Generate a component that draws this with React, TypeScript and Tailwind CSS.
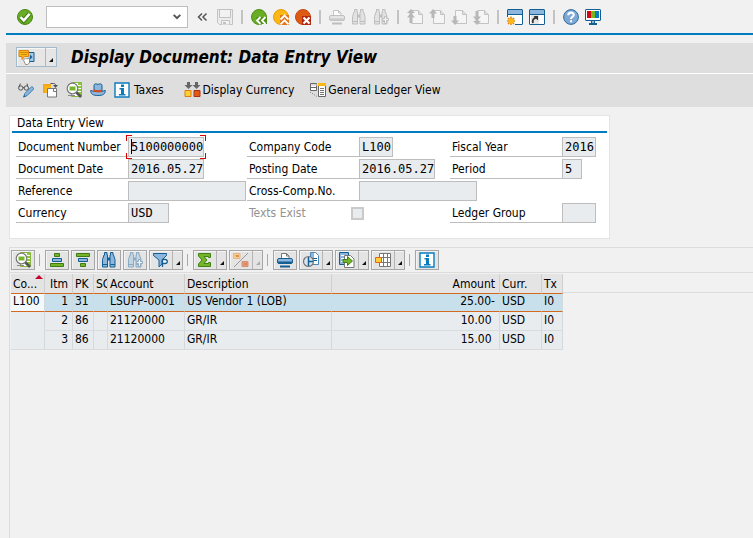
import React, { ReactNode } from "react";

function Icon({ children, label, size = "h-4 w-4" }: { children: ReactNode; label?: string; size?: string }) {
  return (
    <svg viewBox="0 0 16 16" className={`${size} shrink-0`} fill="none" aria-label={label} aria-hidden={label ? undefined : true}>
      {children}
    </svg>
  );
}

/* ---------- system toolbar icons ---------- */

const CheckIcon = () => (
  <Icon>
    <circle cx="8" cy="8" r="7.5" fill="#69ad25" stroke="#4a8712" />
    <path d="M3.5 8.2 6.8 11.6 12.6 4.8" stroke="#3d7710" strokeWidth="4.4" />
    <path d="M3.5 8.2 6.8 11.4 12.6 4.8" stroke="#fff" strokeWidth="2.5" />
  </Icon>
);

const SaveIcon = () => (
  <Icon>
    <path d="M.5.5h15v15h-13l-2-2z" fill="#ececec" stroke="#c2c2c2" />
    <path d="M2.500 1v7.500h11V1" fill="#f2f2f2" stroke="#c2c2c2" />
    <path d="M4.500 15.500v-4h8v4" stroke="#c2c2c2" fill="#f2f2f2" />
    <path d="M6 13h3v2H6z" fill="#c2c2c2" />
  </Icon>
);

const BackIcon = () => (
  <Icon>
    <circle cx="8" cy="8" r="7.5" fill="#69ad25" stroke="#4d8f15" />
    <path d="M5 8h11v7H7z" fill="#4d8f15" />
    <path d="m9.500 8-3.500 3.500 3.500 3.500M14.500 8 11 11.500l3.500 3.500" stroke="#fff" strokeWidth="1.800" />
  </Icon>
);

const ExitIcon = () => (
  <Icon>
    <circle cx="8" cy="8" r="7.5" fill="#fdb913" stroke="#e89a0c" />
    <path d="M7 6h9v10H7z" fill="#e2761b" />
    <path d="m7.500 10.500 4-4 4 4M7.500 15.300l4-4 4 4" stroke="#fff" strokeWidth="1.800" />
  </Icon>
);

const CancelIcon = () => (
  <Icon>
    <circle cx="8" cy="8" r="7.5" fill="#dd5a12" stroke="#c24a10" />
    <path d="M7 7h9v9H7z" fill="#b3260e" />
    <path d="m8.500 8.500 6 6m0-6-6 6" stroke="#fff" strokeWidth="2.200" />
  </Icon>
);

const PrinterIcon = ({ muted = false }: { muted?: boolean }) => {
  const line = muted ? "#bfbfbf" : "#145f92";
  const fill = muted ? "#e4e4e4" : "#8db6de";
  return (
    <Icon>
      <path d="M4.500 7V1.500h5l2.500 2.500v3" fill="#fff" stroke={muted ? "#c4c4c4" : "#777"} />
      <path d="M9.500 1.500V4H12" stroke={muted ? "#c4c4c4" : "#777"} />
      <rect x=".5" y="6.500" width="15" height="5" rx="1.500" fill={fill} stroke={line} />
      <path d="M1 9.500h14v2H1z" fill={muted ? "#c9c9c9" : line} />
      <path d="M3 13.500h10v2H3z" fill={line} />
    </Icon>
  );
};

const BinocularsIcon = ({ tone, plus = false }: { tone: "gray" | "blue" | "pale"; plus?: boolean }) => {
  const line = tone === "gray" ? "#bebebe" : tone === "blue" ? "#145f92" : "#8aaac0";
  const fill = tone === "gray" ? "#e2e2e2" : tone === "blue" ? "#8db6de" : "#c3d4e4";
  return (
    <Icon>
      <path d="M3.500 .5h2.500v2.500h.5v12h-5V7.500l1.500-4.500h.5z" fill={fill} stroke={line} />
      <path d="M9.500 .5h2.500v2.500h.5l1.500 4.500v7.500h-5V3h.5z" fill={fill} stroke={line} />
      <path d="M6.500 5.500h2.500v3H6.500z" fill={line} />
      <path d="M2 12.500h4.500m3 0H14" stroke={line} />
      {plus && <path d="M9.500 9.500h2v-2h2v2h2v2h-2v3h-2v-3h-2z" fill="#f3f3f3" stroke={line} />}
    </Icon>
  );
};

const PageIcon = ({ kind }: { kind: "first" | "prev" | "next" | "last" }) => (
  <Icon>
    <path d="M4.500 1.500h7l4 4v9h-11z" fill="#f5f5f5" stroke="#c3c3c3" />
    <path d="M11.500 1.500v4h4" stroke="#c3c3c3" fill="#ddd" />
    {kind === "first" && <path d="m4 0 4 4H5.500v1.500L8 8.500H5.500V14h-3V8.500H0l2.500-3V4H0z" fill="#b8b8b8" />}
    {kind === "prev" && <path d="m4 0 4 4.500H5.500V9h-3V4.500H0z" fill="#b8b8b8" />}
    {kind === "next" && <path d="m4 16 4-4.500H5.500V7h-3v4.500H0z" fill="#b8b8b8" />}
    {kind === "last" && <path d="m4 16 4-4H5.500v-1.500L8 7.500H5.500V2h-3v5.500H0l2.500 3V12H0z" fill="#b8b8b8" />}
  </Icon>
);

const WindowIcon = ({ kind }: { kind: "new" | "shortcut" }) => (
  <Icon>
    <rect x=".5" y=".5" width="15" height="15" rx=".5" fill="#fff" stroke="#145f92" />
    <path d="M1 1h14v4H1z" fill="#8db6de" />
    <path d="M1 5.500h14" stroke="#145f92" />
    {kind === "new" ? (
      <>
        <path d="M0 8h8v8H0z" fill="#f2f2f2" />
        <path d="M4 7.500v9M0 12h8M1 9l6 6m0-6-6 6" stroke="#e8870c" strokeWidth="1.600" />
        <circle cx="4" cy="12" r="2.600" fill="#fdb913" />
      </>
    ) : (
      <>
        <path d="M2 6h8v9H2z" fill="#e6e6e6" />
        <path d="M4 14c-1-3 .5-5 4-5.500" stroke="#333" strokeWidth="1.800" />
        <path d="M4.500 7H9v4.500z" fill="#333" />
      </>
    )}
  </Icon>
);

const HelpIcon = () => (
  <Icon>
    <circle cx="8" cy="8" r="7.4" fill="#7fa9d4" stroke="#2d6c9f" />
    <path d="M5.300 6.200c0-3.400 5.400-3.300 5.400-.3 0 1.800-2.700 1.900-2.700 4" stroke="#fff" strokeWidth="2.100" />
    <path d="M7 11.300h2v2H7z" fill="#fff" />
  </Icon>
);

const MonitorIcon = () => (
  <Icon>
    <rect x=".5" y=".5" width="15" height="11" rx=".5" fill="#fff" stroke="#145f92" />
    <path d="M2 2h4v7H2z" fill="#cc0c12" />
    <path d="M6 2h4v7H6z" fill="#7ab41d" />
    <path d="M10 2h4v7h-4z" fill="#087cc0" />
    <path d="M6 12h4v2H6zM4 14h8v2H4z" fill="#145f92" />
    <path d="M7 12h2v2H7z" fill="#8db6de" />
  </Icon>
);

/* ---------- application toolbar icons ---------- */

const ServicesIcon = () => (
  <Icon size="h-4 w-[17px]">
    <path d="M10 3.500h5.500v9H9" fill="#a9c8e5" stroke="#145f92" />
    <path d="M11.500 5.500v5l2.500-2.500z" fill="#145f92" />
    <path d="M.5 1.500h9.500v6H6l-2.500 3v-3h-3z" fill="#fdb913" stroke="#dd8212" />
    <path d="M2 3.500h7M3 5.500h6" stroke="#9a5c08" strokeDasharray="1 1" />
    <path d="m5 11 2-2 1 1 3-1v5l-2 1.500H7z" fill="#fff" stroke="#777" strokeWidth=".8" />
  </Icon>
);

const GlassesPenIcon = () => (
  <Icon>
    <circle cx="2.800" cy="6" r="2.200" stroke="#555" />
    <circle cx="8.300" cy="6" r="2.200" stroke="#555" />
    <path d="M.8 5 2.500 1.500M5 5.500h1.200M9.800 4.500 9 1.500" stroke="#555" />
    <path d="m6 14.800.8-3.300 7-7L16 6.700l-7 7z" fill="#8db6de" stroke="#2f75a8" strokeWidth=".9" />
    <path d="m5 15.500 1-2.500 1.500 1.500z" fill="#145f92" />
  </Icon>
);

const OtherDocIcon = () => (
  <Icon>
    <path d="M1 2h8v9H1z" fill="#fdb913" />
    <path d="M1 2h8v2H3v7H1z" fill="#f7a51b" />
    <path d="M5.500 6.500h9v8.500h-9z" fill="#fff" stroke="#777" />
    <path d="M11.500 6.500v3h3" stroke="#777" />
    <path d="M8.500 1.500h3c1.500 0 2 .5 2 2" stroke="#555" />
    <path d="M11 3h5l-2.500 3z" fill="#555" />
  </Icon>
);

const DetailsIcon = () => (
  <Icon>
    <path d="M5.500.5h10v14h-10z" fill="#fff" stroke="#87b83c" />
    <path d="M12 1h3v13h-3z" fill="#8cc63f" />
    <path d="M12 3.500h3M12 6.500h3M12 9.500h3" stroke="#fff" />
    <path d="M2 13.500h7" stroke="#888" />
    <circle cx="6.500" cy="6.500" r="5.300" fill="#fff" stroke="#777" strokeWidth="1.200" />
    <path d="M3.500 4.500h6v4h-6z" fill="#75b52b" />
    <path d="m10.500 10.500 4.500 4.500" stroke="#555" strokeWidth="2.600" />
  </Icon>
);

const HatIcon = () => (
  <Icon>
    <path d="M4 9V3.500C4 1.500 6.500 1.500 8 2.500c1.500-1 4-1 4 1V9z" fill="#8db6de" stroke="#145f92" />
    <path d="M.7 8.500c1 0 2 .5 3.300 1h8c1.300-.5 2.300-1 3.300-1C15.300 12 13 13.500 8 13.500S.7 12 .7 8.500z" fill="#8db6de" stroke="#145f92" />
    <path d="M4 7.500c2 1 6 1 8 0V9.500c-2 1.200-6 1.200-8 0z" fill="#d9471b" />
  </Icon>
);

const InfoIcon = () => (
  <Icon>
    <path d="M1 1h14v14H1z" fill="#fff" stroke="#0a7cbd" strokeWidth="1.400" />
    <path d="M7 2.500h3v2.500H7zM5.500 6H10v6h1.500v1.500H5V12h2V7.500H5.500z" fill="#0a7cbd" />
  </Icon>
);

const CurrencyIcon = () => (
  <Icon size="h-4 w-[17px]">
    <path d="M2.500 0h3v3H8L4 7 0 3h2.500zM10.500 0h3v3H16l-4 4-4-4h2.500z" fill="#666" />
    <path d="M.5 8.500h6v6h-6z" fill="#fdd032" stroke="#dd7d13" />
    <path d="M9.500 8.500h6v6h-6z" fill="#e35a17" stroke="#a93212" />
  </Icon>
);

const LedgerIcon = () => (
  <Icon>
    <path d="M.5 1.500h6v7h-6z" fill="#fff" stroke="#666" />
    <path d="M1 2h5.500v2H1z" fill="#ddd" />
    <path d="M1 5.500h5.500" stroke="#666" />
    <path d="M8.500 1.500h7v13h-7z" fill="#fff" stroke="#666" />
    <path d="M8 1h8v3H8z" fill="#fdb913" />
    <path d="M10 6.500h4M10 8.500h4M10 10.500h4M10 12.500h4" stroke="#777" />
    <path d="m0 10 7 4.500" stroke="#777" strokeDasharray="1 1.500" />
  </Icon>
);

/* ---------- grid toolbar icons ---------- */

const SortIcon = ({ descending = false }: { descending?: boolean }) => (
  <Icon>
    {descending ? (
      <>
        <path d="M1.500 1.500h13v3h-13z" fill="#75b52b" stroke="#3f7d14" />
        <path d="M3.500 6.500h9v3h-9z" fill="#8db6de" stroke="#145f92" />
        <path d="M5.500 11.500h5v3h-5z" fill="#75b52b" stroke="#3f7d14" />
      </>
    ) : (
      <>
        <path d="M5.500 1.500h5v3h-5z" fill="#75b52b" stroke="#3f7d14" />
        <path d="M3.500 6.500h9v3h-9z" fill="#8db6de" stroke="#145f92" />
        <path d="M1.500 11.500h13v3h-13z" fill="#75b52b" stroke="#3f7d14" />
      </>
    )}
  </Icon>
);

const FilterIcon = () => (
  <Icon>
    <path d="M.5 1.500h13v2L9 8v4l-3 3V8L.5 3.500z" fill="#8db6de" stroke="#145f92" />
    <path d="M9.500 15V7.500H12c3 0 3 4 0 4H9.500" fill="#fff" stroke="#145f92" strokeWidth="1.300" />
  </Icon>
);

const SumIcon = () => (
  <Icon>
    <path d="M1.500 1.500h12v4h-2V4.500H7L10 8l-3 3.500h4.500v-1h2v4h-12V12L5 8 1.500 4z" fill="#75b52b" stroke="#3f8213" />
  </Icon>
);

const SubtotalIcon = () => (
  <Icon>
    <path d="M.5 1.500h6.500v5H.5z" fill="#f8cf80" stroke="#e9b38a" />
    <path d="M9 9.500h6v5H9z" fill="#e39a77" stroke="#d98e76" />
    <path d="M2.500 3.500h3v1H3M11 11.500h3v1h-3" stroke="#d78d61" />
    <path d="M1 15 15 1" stroke="#999" />
  </Icon>
);

const ViewsIcon = () => (
  <Icon>
    <path d="M15.500 12.500h-8v-12h5l3 3z" fill="#fff" stroke="#4b87b5" />
    <path d="M8 1h3v6H8z" fill="#8db6de" />
    <path d="M10 6.500h4M10 8.500h4" stroke="#145f92" />
    <circle cx="5.500" cy="9.500" r="5" fill="#d8e4ef" stroke="#777" strokeWidth="1.200" />
    <path d="M5.500 5v9M5.500 9.500H10" stroke="#145f92" strokeWidth="1.500" />
  </Icon>
);

const ExportIcon = () => (
  <Icon>
    <path d="M.5.500h9v12h-9z" fill="#8db6de" stroke="#145f92" />
    <path d="M2 3.500h4M2 6.500h3M2 9.500h3" stroke="#fff" />
    <path d="M5.500 3.500h6l3.500 3.500v8.500H5.500z" fill="#fff" stroke="#777" />
    <path d="M4 7.500h4.500v-3l5 4.500-5 4.500v-3H4z" fill="#75b52b" stroke="#3f7d14" />
  </Icon>
);

const LayoutIcon = () => (
  <Icon>
    <path d="M4.500 1.500h11v13h-11zM4.500 5.500h11M4.500 10.500h11M8.500 1.500v13M12.500 1.500v13" fill="#fff" stroke="#777" />
    <path d="M.500 5.500h6v5h-6z" fill="#fdd032" stroke="#e0661b" />
  </Icon>
);

/* ---------- building blocks ---------- */

const IconButton = ({ label, disabled, children }: { label: string; disabled?: boolean; children: ReactNode }) => (
  <button type="button" aria-label={label} disabled={disabled} className="flex h-4 w-4 items-center justify-center">
    {children}
  </button>
);

const BarSeparator = () => <span className="mx-0.5 h-3.5 w-0.5 bg-[#c3c3c3]" />;

const Corner = ({ muted = false }: { muted?: boolean }) => (
  <svg viewBox="0 0 4 4" className="h-1 w-1" aria-hidden="true">
    <path d="M4 0v4H0z" fill={muted ? "#aaa" : "#111"} />
  </svg>
);

const GridButton = ({ label, split, muted, children }: { label: string; split?: boolean; muted?: boolean; children: ReactNode }) => (
  <div className="flex h-5 border border-[#a6a6a6] bg-[#e4e4e4] shadow-[inset_1px_1px_0_#f4f4f4]">
    <button type="button" aria-label={label} disabled={muted} className="flex w-[22px] items-center justify-center">
      {children}
    </button>
    {split && (
      <button
        type="button"
        aria-label={`${label} options`}
        disabled={muted}
        className="flex w-2.5 items-end justify-end border-l border-[#b4b4b4] pr-0.5 pb-1"
      >
        <Corner muted={muted} />
      </button>
    )}
  </div>
);

const GridSeparator = () => <span className="mr-[3px] ml-0.5 h-3 w-px bg-[#a9a9a9]" />;

function FormLabel({ htmlFor, children }: { htmlFor: string; children: ReactNode }) {
  return (
    <label htmlFor={htmlFor} className="h-5 border-b border-[#bdbdbd] pl-0.5 leading-5 whitespace-nowrap">
      {children}
    </label>
  );
}

function Field({ id, value = "", width }: { id: string; value?: string; width: string }) {
  return (
    <input
      id={id}
      readOnly
      value={value}
      className={`${width} h-5 border border-[#bdbdbd] bg-[#e8ecef] pl-0.5 font-['DejaVu_Sans_Mono','Liberation_Mono',monospace] text-xs text-black outline-none`}
    />
  );
}

const columns = [
  { name: "Itm", width: "w-[28px]" },
  { name: "PK", width: "w-[21px]" },
  { name: "SC", width: "w-[14px]" },
  { name: "Account", width: "w-[77px]" },
  { name: "Description", width: "w-[147px]" },
  { name: "Amount", width: "w-[168px]" },
  { name: "Curr.", width: "w-[42px]" },
  { name: "Tx", width: "w-[21px]" },
];

const items = [
  ["1", "31", "", "LSUPP-0001", "US Vendor 1 (LOB)", "25.00-", "USD", "I0"],
  ["2", "86", "", "21120000", "GR/IR", "10.00\u00a0", "USD", "I0"],
  ["3", "86", "", "21120000", "GR/IR", "15.00\u00a0", "USD", "I0"],
];

const alignment = (name: string) => (name === "Itm" || name === "Amount" ? "pr-1 text-right" : "px-0.5 text-left");

const headCell = "border-r border-b border-solid border-r-[#cfcfcf] border-b-[#d2691e] pt-px pb-0 font-normal";
const selectedCell = "border-r border-b border-solid border-r-[#d4d9dc] border-b-[#d2691e] pt-0 pb-0.5";
const plainCell = "border-r border-b border-solid border-r-[#d4d9dc] border-b-[#d9dcde] pt-0 pb-0.5";

export default function App() {
  return (
    <div className="flex min-h-screen flex-col bg-[#f1f1f1] pl-1.5 font-['DejaVu_Sans_Condensed','Noto_Sans',sans-serif] text-xs text-black">
      <header className="flex h-[35px] items-center gap-1.5 border-b-2 border-[#007cc0] pl-[11px]">
        <IconButton label="Enter">
          <CheckIcon />
        </IconButton>
        <div className="relative mr-px ml-[7px] h-[22px] w-[142px]">
          <select aria-label="Command" className="h-full w-full appearance-none border border-[#bdbdbd] bg-white px-1 outline-none">
            <option></option>
          </select>
          <svg viewBox="0 0 8 6" className="pointer-events-none absolute top-2 right-[7px] h-1.5 w-2" aria-hidden="true">
            <path d="m.7.900 3.300 3.300L7.300.900" fill="none" stroke="#555" strokeWidth="2" />
          </svg>
        </div>
        <IconButton label="Hide command field">
          <Icon>
            <path d="M7 4.500 3.500 8 7 11.500M11.500 4.500 8 8l3.500 3.500" stroke="#555" strokeWidth="1.500" />
          </Icon>
        </IconButton>
        <IconButton label="Save" disabled><SaveIcon /></IconButton>
        <BarSeparator />
        <IconButton label="Back"><BackIcon /></IconButton>
        <IconButton label="Exit"><ExitIcon /></IconButton>
        <IconButton label="Cancel"><CancelIcon /></IconButton>
        <BarSeparator />
        <IconButton label="Print" disabled><PrinterIcon muted /></IconButton>
        <IconButton label="Find" disabled><BinocularsIcon tone="gray" /></IconButton>
        <IconButton label="Find next" disabled><BinocularsIcon tone="gray" plus /></IconButton>
        <BarSeparator />
        <IconButton label="First page" disabled><PageIcon kind="first" /></IconButton>
        <IconButton label="Previous page" disabled><PageIcon kind="prev" /></IconButton>
        <IconButton label="Next page" disabled><PageIcon kind="next" /></IconButton>
        <IconButton label="Last page" disabled><PageIcon kind="last" /></IconButton>
        <BarSeparator />
        <IconButton label="New session"><WindowIcon kind="new" /></IconButton>
        <IconButton label="Create shortcut"><WindowIcon kind="shortcut" /></IconButton>
        <BarSeparator />
        <IconButton label="Help"><HelpIcon /></IconButton>
        <IconButton label="Customize layout"><MonitorIcon /></IconButton>
      </header>

      <div className="mt-2 flex h-[30px] items-center bg-[#dedede] pb-0.5 pl-2.5">
        <div className="flex h-5 border border-[#a3b9cc] bg-[#e6e6e6] shadow-[inset_1px_1px_0_#f6f6f6]">
          <button type="button" aria-label="Services for object" className="flex w-7 items-center pl-px">
            <ServicesIcon />
          </button>
          <button type="button" aria-label="More services" className="flex w-[11px] items-end justify-end border-l border-[#b4b4b4] pr-[3px] pb-1">
            <Corner />
          </button>
        </div>
        <h1 className="ml-3.5 text-[17px] leading-5 font-bold whitespace-nowrap italic">Display Document: Data Entry View</h1>
      </div>

      <div className="mt-px flex h-[33px] items-center gap-2 bg-[#dedede] pb-0.5 pl-3 shadow-[0_-1px_0_#fff]">
        <IconButton label="Display / change"><GlassesPenIcon /></IconButton>
        <IconButton label="Other document"><OtherDocIcon /></IconButton>
        <IconButton label="Select individual object"><DetailsIcon /></IconButton>
        <IconButton label="Document header"><HatIcon /></IconButton>
        <button type="button" className="flex items-center gap-1 whitespace-nowrap"><InfoIcon />Taxes</button>
        <button type="button" className="ml-3 flex items-center gap-0.5 whitespace-nowrap"><CurrencyIcon />Display Currency</button>
        <button type="button" className="ml-2 flex items-center gap-0.5 whitespace-nowrap"><LedgerIcon />General Ledger View</button>
      </div>

      <main className="flex flex-1 flex-col pt-2 pl-[3px]">
        <section className="w-fit border border-[#e4e4e4] bg-white px-0.5 pb-[15px]">
          <h2 className="border-b-2 border-[#007cc0] pl-[5px] leading-[15px]">Data Entry View</h2>
          <form className="grid grid-cols-[112px_119px_112px_91px_112px_41px] gap-y-0.5 px-1 pt-1">
            <FormLabel htmlFor="docno">Document Number</FormLabel>
            <div className="relative h-5 w-[76px]">
              <Field id="docno" value="5100000000" width="w-[76px]" />
              <span className="absolute -top-0.5 -left-0.5 h-1.5 w-1.5 border-t border-l border-[#d90000]" />
              <span className="absolute -top-0.5 -right-0.5 h-1.5 w-1.5 border-t border-r border-[#d90000]" />
              <span className="absolute -bottom-0.5 -left-0.5 h-1.5 w-1.5 border-b border-l border-[#d90000]" />
              <span className="absolute -right-0.5 -bottom-0.5 h-1.5 w-1.5 border-r border-b border-[#d90000]" />
              <span className="absolute top-0.5 left-[3px] h-[15px] w-px bg-black" />
            </div>
            <FormLabel htmlFor="company">Company Code</FormLabel>
            <Field id="company" value="L100" width="w-[34px]" />
            <FormLabel htmlFor="year">Fiscal Year</FormLabel>
            <Field id="year" value="2016" width="w-[34px]" />

            <FormLabel htmlFor="docdate">Document Date</FormLabel>
            <Field id="docdate" value="2016.05.27" width="w-[76px]" />
            <FormLabel htmlFor="posting">Posting Date</FormLabel>
            <Field id="posting" value="2016.05.27" width="w-[76px]" />
            <FormLabel htmlFor="period">Period</FormLabel>
            <Field id="period" value="5" width="w-[20px]" />

            <FormLabel htmlFor="reference">Reference</FormLabel>
            <Field id="reference" width="w-[118px]" />
            <FormLabel htmlFor="cross">Cross-Comp.No.</FormLabel>
            <div className="col-span-3 flex">
              <Field id="cross" width="w-[118px]" />
            </div>

            <FormLabel htmlFor="currency">Currency</FormLabel>
            <Field id="currency" value="USD" width="w-[41px]" />
            <div className="col-span-2 flex h-5 items-center pl-0.5">
              <label htmlFor="texts" className="w-[102px] text-[#929292]">Texts Exist</label>
              <input id="texts" type="checkbox" disabled className="h-[13px] w-[13px] appearance-none border-2 border-[#cacaca] bg-[#e8ecef]" />
            </div>
            <FormLabel htmlFor="ledger">Ledger Group</FormLabel>
            <Field id="ledger" width="w-[34px]" />
          </form>
        </section>

        <section className="mt-2 flex-1 border-t border-l border-[#dcdcdc]">
          <div className="flex h-[25px] items-center gap-0.5 border-b border-[#dcdcdc] pl-px">
            <GridButton label="Details"><DetailsIcon /></GridButton>
            <GridSeparator />
            <GridButton label="Sort ascending"><SortIcon /></GridButton>
            <GridButton label="Sort descending"><SortIcon descending /></GridButton>
            <GridButton label="Find in list"><BinocularsIcon tone="blue" /></GridButton>
            <GridButton label="Find next in list" muted><BinocularsIcon tone="pale" plus /></GridButton>
            <GridButton label="Filter" split><FilterIcon /></GridButton>
            <GridSeparator />
            <GridButton label="Total" split><SumIcon /></GridButton>
            <GridButton label="Subtotals" split muted><SubtotalIcon /></GridButton>
            <GridSeparator />
            <GridButton label="Print list"><PrinterIcon /></GridButton>
            <GridButton label="Views" split><ViewsIcon /></GridButton>
            <GridButton label="Export" split><ExportIcon /></GridButton>
            <GridButton label="Choose layout" split><LayoutIcon /></GridButton>
            <GridSeparator />
            <GridButton label="Information"><InfoIcon /></GridButton>
          </div>

          <div className="flex items-start pt-px pl-px">
            <table className="w-[552px] table-fixed border-separate border-spacing-0 leading-[15px] whitespace-nowrap">
              <thead>
                <tr className="h-5 bg-[#e4e4e4]">
                  <th className={`${headCell} relative w-[34px] pl-0.5 text-left`}>
                    Co...
                    <svg viewBox="0 0 8 4" className="absolute top-px right-px h-1 w-2" aria-hidden="true">
                      <path d="M0 4 4 0l4 4z" fill="#c8002c" />
                    </svg>
                  </th>
                  {columns.map((c) => (
                    <th key={c.name} className={`${headCell} ${c.width} ${alignment(c.name)} overflow-hidden`}>
                      {c.name}
                    </th>
                  ))}
                </tr>
              </thead>
              <tbody>
                {items.map((row, r) => (
                  <tr key={row[0]} className={r === 0 ? "h-[18px] bg-[#c8e0ec]" : "h-[19px] bg-[#e8ecef]"}>
                    {r === 0 && <td className={`${selectedCell} bg-[#f3f8fb] pl-0.5`}>L100</td>}
                    {r === 1 && <td rowSpan={2} className={plainCell} />}
                    {row.map((value, i) => (
                      <td key={i} className={`${r === 0 ? selectedCell : plainCell} ${alignment(columns[i].name)}`}>
                        {value}
                      </td>
                    ))}
                  </tr>
                ))}
              </tbody>
            </table>
            <div className="h-[19px] flex-1 border-b border-[#dcdcdc]" />
          </div>
        </section>
      </main>
    </div>
  );
}
